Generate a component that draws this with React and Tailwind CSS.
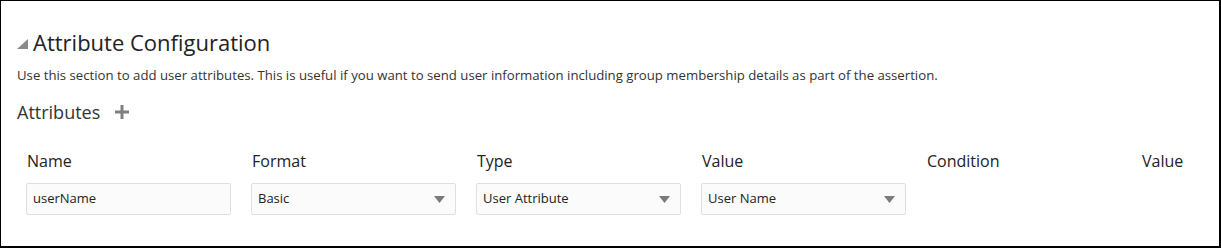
import React from "react";

const font = { fontFamily: '"Open Sans", "Noto Sans", sans-serif' };

function Arrow() {
  return (
    <svg width="11" height="7" viewBox="0 0 11 7" className="shrink-0">
      <path d="M0 0 H11 L5.5 7 Z" fill="#7b7b7b" />
    </svg>
  );
}

function Select({ value }) {
  return (
    <div className="flex h-[32px] w-[205px] items-center justify-between rounded-[2px] border border-[#dfdfdf] bg-[#fbfbfb] pl-[6px] pr-[10px] text-[13px] text-[#222]">
      <span>{value}</span>
      <Arrow />
    </div>
  );
}

export default function App() {
  return (
    <div className="h-[248px] w-[1221px] bg-white" style={font}>
      <div className="h-[248px] w-[1221px] border border-r-2 border-b-2 border-black pl-[16px] pt-[26px] text-[#333]">
        <div className="flex items-center gap-[5px]">
          <svg width="11" height="10" viewBox="0 0 11 10" className="mt-[3px]">
            <path d="M11 0 V10 H0 Z" fill="#8a8a8a" />
          </svg>
          <h2 className="text-[22px] leading-[30px] text-[#222]">Attribute Configuration</h2>
        </div>
        <p className="mt-[9px] text-[13.2px] leading-[18px] text-[#333]">
          Use this section to add user attributes. This is useful if you want to send user information including group membership details as part of the assertion.
        </p>
        <div className="mt-[16px] flex items-center gap-[15px]">
          <span className="text-[18px] leading-[24px] text-[#333]">Attributes</span>
          <svg width="14" height="14" viewBox="0 0 14 14">
            <path d="M5.5 0 H8.5 V5.5 H14 V8.5 H8.5 V14 H5.5 V8.5 H0 V5.5 H5.5 Z" fill="#7f7f7f" />
          </svg>
        </div>
        <div className="mt-[25px] pl-[10px]">
          <div className="flex text-[16px] leading-[24px] text-[#222]">
            <div className="w-[225px]">Name</div>
            <div className="w-[225px]">Format</div>
            <div className="w-[225px]">Type</div>
            <div className="w-[225px]">Value</div>
            <div className="w-[215px]">Condition</div>
            <div>Value</div>
          </div>
          <div className="-ml-[1px] mt-[10px] flex gap-[20px]">
            <div className="flex h-[32px] w-[205px] items-center rounded-[2px] border border-[#dfdfdf] bg-[#fbfbfb] pl-[6px] text-[13px] text-[#222]">
              userName
            </div>
            <Select value="Basic" />
            <Select value="User Attribute" />
            <Select value="User Name" />
          </div>
        </div>
      </div>
    </div>
  );
}
